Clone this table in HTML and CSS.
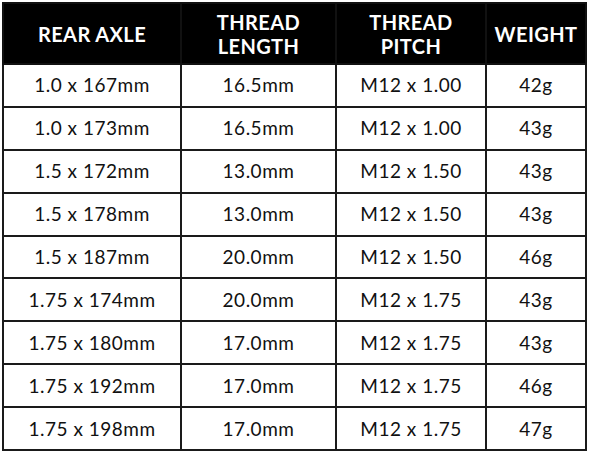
FILE: index.html
```html
<!DOCTYPE html>
<html>
<head>
<meta charset="utf-8">
<link rel="stylesheet" href="styles.css">
</head>
<body>
<table class="spec">
  <colgroup>
    <col class="c1"><col class="c2"><col class="c3"><col class="c4">
  </colgroup>
  <thead>
    <tr><th>REAR AXLE</th><th>THREAD<br>LENGTH</th><th>THREAD<br>PITCH</th><th>WEIGHT</th></tr>
  </thead>
  <tbody>
    <tr><td>1.0 x 167mm</td><td>16.5mm</td><td>M12 x 1.00</td><td>42g</td></tr>
    <tr><td>1.0 x 173mm</td><td>16.5mm</td><td>M12 x 1.00</td><td>43g</td></tr>
    <tr><td>1.5 x 172mm</td><td>13.0mm</td><td>M12 x 1.50</td><td>43g</td></tr>
    <tr><td>1.5 x 178mm</td><td>13.0mm</td><td>M12 x 1.50</td><td>43g</td></tr>
    <tr><td>1.5 x 187mm</td><td>20.0mm</td><td>M12 x 1.50</td><td>46g</td></tr>
    <tr><td>1.75 x 174mm</td><td>20.0mm</td><td>M12 x 1.75</td><td>43g</td></tr>
    <tr><td>1.75 x 180mm</td><td>17.0mm</td><td>M12 x 1.75</td><td>43g</td></tr>
    <tr><td>1.75 x 192mm</td><td>17.0mm</td><td>M12 x 1.75</td><td>46g</td></tr>
    <tr><td>1.75 x 198mm</td><td>17.0mm</td><td>M12 x 1.75</td><td>47g</td></tr>
  </tbody>
</table>
</body>
</html>
```
FILE: styles.css
```css
html, body {
  margin: 0;
  padding: 0;
  background: #ffffff;
}
body {
  padding: 2px 0 0 2px;
  font-family: "Lato", "DejaVu Sans", sans-serif;
  color: #111111;
}
.spec {
  border-collapse: collapse;
  table-layout: fixed;
  width: 583px;
}
.c1 { width: 178px; }
.c2 { width: 155px; }
.c3 { width: 150px; }
.c4 { width: 100px; }
.spec th {
  background: #000000;
  color: #ffffff;
  font-weight: 700;
  font-size: 20px;
  line-height: 24px;
  height: 59px;
  padding: 0;
  text-align: center;
  vertical-align: middle;
  border: 2px solid #111111;
  border-left-color: #ffffff;
  letter-spacing: 0.4px;
}
.spec th:first-child { border-left-color: #111111; }
.spec td {
  font-size: 19px;
  line-height: 20px;
  height: 40.9px;
  padding: 0;
  text-align: center;
  vertical-align: middle;
  border: 2px solid #1a1a1a;
  letter-spacing: 0.5px;
}
```
